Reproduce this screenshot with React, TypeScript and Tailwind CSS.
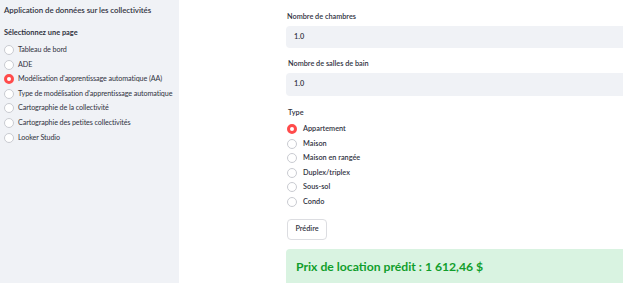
import { useState } from 'react';

const pages = [
    'Tableau de bord',
    'ADE',
    "Modélisation d'apprentissage automatique (AA)",
    "Type de modélisation d'apprentissage automatique",
    'Cartographie de la collectivité',
    'Cartographie des petites collectivités',
    'Looker Studio',
];

const types = ['Appartement', 'Maison', 'Maison en rangée', 'Duplex/triplex', 'Sous-sol', 'Condo'];

const Radio = ({ checked }: { checked: boolean }) => (
    checked
        ? <span className="w-[10px] h-[10px] rounded-full border-[3px] border-[#ff4b4b] bg-white shrink-0" />
        : <span className="w-[10px] h-[10px] rounded-full border border-[#c9cbd1] bg-white shrink-0" />
);

export default function App() {
    const [page, setPage] = useState(2);
    const [type, setType] = useState(0);

    return (
        <div className="flex w-[623px] h-[283px] overflow-hidden bg-white text-[#31333f] font-['Lato',sans-serif]">
            <div className="w-[179px] shrink-0 bg-[#f0f2f6] pl-[4px] pt-[5px]">
                <div className="text-[7.9px] tracking-[-0.05px] font-semibold leading-[11px]">Application de données sur les collectivités</div>
                <div className="mt-[12px] text-[7.4px] font-bold leading-[10px]">Sélectionnez une page</div>
                <div className="mt-[7px] flex flex-col gap-[4.6px]">
                    {pages.map((p, i) => (
                        <div key={p} className="flex items-center gap-[4px] h-[10px] cursor-pointer" onClick={() => setPage(i)}>
                            <Radio checked={page === i} />
                            <span className="text-[7.2px] tracking-[-0.1px] leading-[10px] whitespace-nowrap">{p}</span>
                        </div>
                    ))}
                </div>
            </div>

            <div className="flex-1 pl-[107px] pt-[12px] min-w-0">
                <div className="w-[360px]">
                    <div className="pl-[1px] text-[7.3px] font-semibold leading-[10px]">Nombre de chambres</div>
                    <div className="mt-[4px] h-[22px] rounded-[4px] bg-[#f0f2f6] flex items-center pl-[8px] text-[7.3px] font-semibold">1.0</div>

                    <div className="mt-[11px] pl-[2px] text-[7.3px] font-semibold leading-[10px]">Nombre de salles de bain</div>
                    <div className="mt-[4px] h-[23px] rounded-[4px] bg-[#f0f2f6] flex items-center pl-[8px] text-[7.3px] font-semibold">1.0</div>

                    <div className="mt-[12px] pl-[2px] text-[7.3px] font-semibold leading-[10px]">Type</div>
                    <div className="mt-[6px] flex flex-col gap-[4.5px] pl-[1px]">
                        {types.map((t, i) => (
                            <div key={t} className="flex items-center gap-[6px] h-[10px] cursor-pointer" onClick={() => setType(i)}>
                                <Radio checked={type === i} />
                                <span className="text-[7.3px] font-semibold leading-[10px]">{t}</span>
                            </div>
                        ))}
                    </div>

                    <button className="mt-[12px] ml-[1px] h-[21px] w-[40px] rounded-[4px] border border-[#dcdde1] bg-white text-[7.3px] font-semibold">
                        Prédire
                    </button>

                    <div className="mt-[9px] h-[44px] rounded-[4px] bg-[#d9f3e1] pl-[10px] pt-[9px] text-[12.2px] leading-[18px] font-bold text-[#119e2c] whitespace-nowrap">
                        Prix de location prédit : 1 612,46 $
                    </div>
                </div>
            </div>
        </div>
    );
}
